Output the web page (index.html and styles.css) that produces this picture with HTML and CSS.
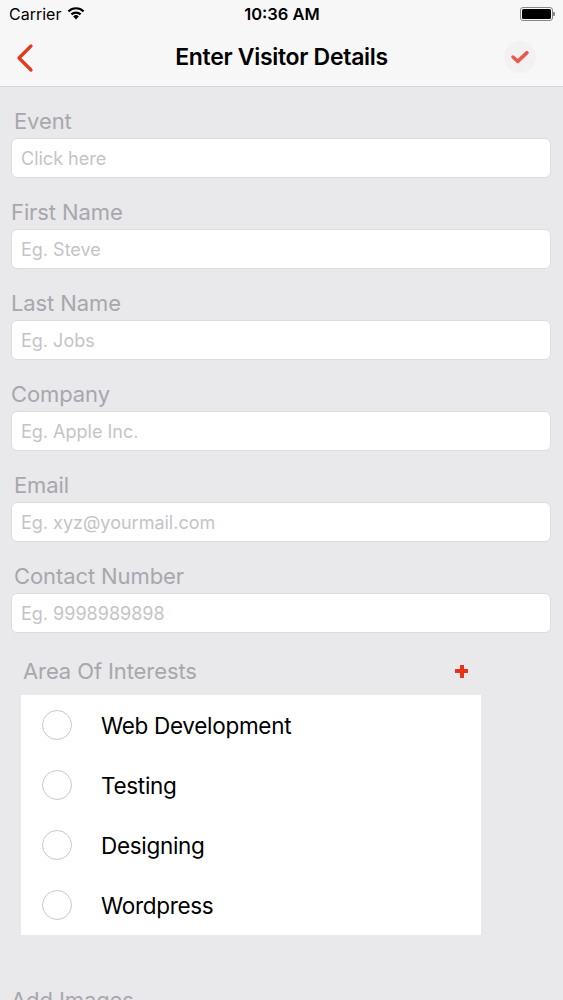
FILE: index.html
```html
<!DOCTYPE html>
<html lang="en">
<head>
    <meta charset="UTF-8">
    <meta name="viewport" content="width=device-width, initial-scale=1.0">
    <title>Enter Visitor Details</title>
    <link rel="stylesheet" href="styles.css">
</head>
<body>
    <div class="status-bar">
        <div class="carrier">
            Carrier
            <svg class="wifi" width="18" height="13" viewBox="0 0 18 13">
                <path d="M9 12.5 L6.2 9.4 A4 4 0 0 1 11.8 9.4 Z" fill="#000"/>
                <path d="M4.4 7.4 A6.6 6.6 0 0 1 13.6 7.4" fill="none" stroke="#000" stroke-width="2.2"/>
                <path d="M1.4 4.4 A10.8 10.8 0 0 1 16.6 4.4" fill="none" stroke="#000" stroke-width="2.2"/>
            </svg>
        </div>
        <div class="clock">10:36 AM</div>
        <div class="battery">
            <span class="battery-body"><span class="battery-level"></span></span>
            <span class="battery-nub"></span>
        </div>
    </div>

    <div class="nav-bar">
        <svg class="back" width="20" height="30" viewBox="0 0 20 30">
            <path d="M16 3 L4 15 L16 27" fill="none" stroke="#e5391f" stroke-width="3.2" stroke-linecap="round" stroke-linejoin="round"/>
        </svg>
        <h1>Enter Visitor Details</h1>
        <span class="done">
            <svg width="20" height="14" viewBox="0 0 22 16">
                <path d="M3 8 L8.5 13 L19 3" fill="none" stroke="#e85a4b" stroke-width="4" stroke-linecap="round" stroke-linejoin="round"/>
            </svg>
        </span>
    </div>

    <form class="form">
        <div class="group">
            <label class="indent">Event</label>
            <div class="input">Click here</div>
        </div>
        <div class="group">
            <label>First Name</label>
            <div class="input">Eg. Steve</div>
        </div>
        <div class="group">
            <label>Last Name</label>
            <div class="input">Eg. Jobs</div>
        </div>
        <div class="group">
            <label>Company</label>
            <div class="input">Eg. Apple Inc.</div>
        </div>
        <div class="group">
            <label class="indent">Email</label>
            <div class="input">Eg. xyz@yourmail.com</div>
        </div>
        <div class="group">
            <label class="indent">Contact Number</label>
            <div class="input">Eg. 9998989898</div>
        </div>

        <div class="interests">
            <div class="interests-head">
                <span>Area Of Interests</span>
                <span class="plus"></span>
            </div>
            <ul class="options">
                <li><span class="radio"></span>Web Development</li>
                <li><span class="radio"></span>Testing</li>
                <li><span class="radio"></span>Designing</li>
                <li><span class="radio"></span>Wordpress</li>
            </ul>
        </div>

        <div class="group images">
            <label>Add Images</label>
        </div>
    </form>
</body>
</html>
```

FILE: styles.css
```css
body {
    margin: 0;
    font-family: Inter, "Liberation Sans", sans-serif;
    background-color: #e9e8eb;
    color: #000;
    height: 1000px;
    overflow: hidden;
}
.status-bar {
    height: 27px;
    background-color: #f7f7f7;
    display: flex;
    align-items: center;
    justify-content: space-between;
    padding: 0 8px 0 9px;
    font-size: 16px;
}
.carrier {
    display: flex;
    align-items: center;
    gap: 6px;
    width: 100px;
}
.clock {
    font-weight: 600;
    font-size: 16.5px;
}
.battery {
    width: 100px;
    display: flex;
    justify-content: flex-end;
    align-items: center;
}
.battery-body {
    width: 29px;
    height: 10px;
    border: 1.5px solid #888;
    border-radius: 3px;
    padding: 1px;
    display: flex;
}
.battery-level {
    flex: 1;
    background-color: #000;
    border-radius: 1.5px;
}
.battery-nub {
    width: 2px;
    height: 4px;
    background-color: #888;
    border-radius: 0 1px 1px 0;
}
.nav-bar {
    height: 59px;
    background-color: #f7f7f7;
    border-bottom: 1px solid #d6d6d8;
    display: grid;
    grid-template-columns: 1fr auto 1fr;
    align-items: center;
    padding: 0 15px;
}
.nav-bar h1 {
    margin: 0;
    font-size: 23px;
    font-weight: 600;
    letter-spacing: -0.3px;
}
.back {
    margin-top: 2px;
}
.done {
    justify-self: end;
    margin-right: 12px;
    width: 32px;
    height: 32px;
    border-radius: 50%;
    background-color: #f3f2f2;
    display: flex;
    align-items: center;
    justify-content: center;
}
.form {
    padding: 0 12px 0 11px;
}
.group {
    margin-top: 21px;
}
.group label {
    display: block;
    font-size: 22px;
    line-height: 26px;
    color: #a8a7ab;
    margin-bottom: 4px;
    letter-spacing: -0.1px;
}
.group label.indent {
    padding-left: 3px;
}
.input {
    height: 40px;
    box-sizing: border-box;
    background-color: #fff;
    border: 1px solid #dcdbde;
    border-radius: 6px;
    padding: 0 9px;
    display: flex;
    align-items: center;
    font-size: 18px;
    color: #c4c4c7;
}
.interests {
    margin: 25px 70px 0 10px;
}
.interests-head {
    display: flex;
    justify-content: space-between;
    align-items: center;
    padding: 0 13px 0 2px;
    font-size: 22px;
    line-height: 26px;
    color: #a8a7ab;
    margin-bottom: 11px;
    letter-spacing: -0.1px;
}
.plus {
    width: 13px;
    height: 13px;
    background:
        linear-gradient(#e8321c, #e8321c) center / 13px 4px no-repeat,
        linear-gradient(#e8321c, #e8321c) center / 4px 13px no-repeat;
}
.options {
    list-style: none;
    margin: 0;
    padding: 0;
    background-color: #fff;
}
.options li {
    height: 60px;
    display: flex;
    align-items: center;
    font-size: 22.5px;
    letter-spacing: -0.3px;
}
.radio {
    width: 28px;
    height: 28px;
    border: 1px solid #c8c8c8;
    border-radius: 50%;
    margin: 0 29px 0 21px;
}
.images {
    margin-top: 52px;
}
```
